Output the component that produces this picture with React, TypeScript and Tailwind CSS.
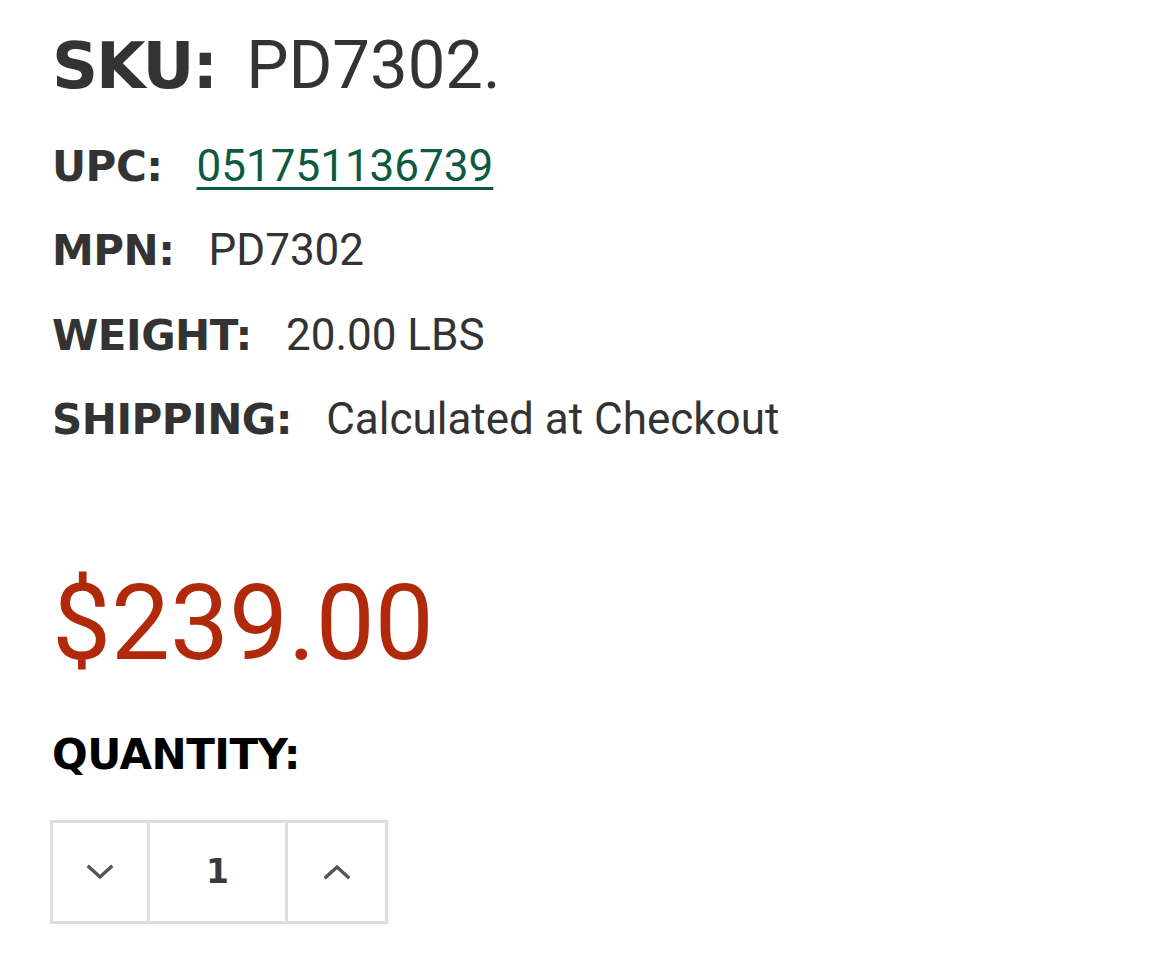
import React from "react";

function Row({ label, children, mt }: { label: string; children: React.ReactNode; mt: string }) {
  return (
    <div className={`flex items-baseline ${mt}`}>
      <span className="font-['DejaVu_Sans',sans-serif] font-bold text-[42px] leading-none tracking-[-0.5px] text-[#333333]">
        {label}
      </span>
      <span className="ml-[34px] font-['Roboto',sans-serif] text-[44px] leading-none text-[#333333]">{children}</span>
    </div>
  );
}

export default function App() {
  return (
    <div className="min-h-[969px] w-[1170px] bg-white pl-[52px] pt-[32px] font-['Roboto',sans-serif]">
      <div className="flex items-baseline">
        <span className="font-['DejaVu_Sans',sans-serif] font-bold text-[64px] leading-none tracking-[-2px] text-[#333333]">
          SKU:
        </span>
        <span className="ml-[30px] font-['Roboto',sans-serif] text-[67px] leading-none text-[#333333]">PD7302.</span>
      </div>
      <Row label="UPC:" mt="mt-[45px]">
        <a href="#" className="text-[#0d5a42] underline decoration-[3px] underline-offset-[6px]">
          051751136739
        </a>
      </Row>
      <Row label="MPN:" mt="mt-[40px]">PD7302</Row>
      <Row label="WEIGHT:" mt="mt-[41px]">20.00 LBS</Row>
      <Row label="SHIPPING:" mt="mt-[40px]">Calculated at Checkout</Row>

      <div className="mt-[130px] font-['Roboto',sans-serif] text-[105px] leading-none text-[#b0290b]">$239.00</div>

      <div className="mt-[58px] font-['DejaVu_Sans',sans-serif] font-bold text-[42px] leading-none tracking-[-0.5px] text-black">
        QUANTITY:
      </div>

      <div className="mt-[44px] flex h-[104px] w-[338px] border-[3px] border-[#dddddd] -ml-[2px]">
        <button className="flex w-[97px] items-center justify-center border-r-[3px] border-[#dddddd]">
          <svg width="26" height="16" viewBox="0 0 26 16" fill="none">
            <path d="M2 3 L13 13 L24 3" stroke="#555555" strokeWidth="3.5" strokeLinecap="square" />
          </svg>
        </button>
        <div className="flex w-[138px] items-center justify-center border-r-[3px] border-[#dddddd] font-['DejaVu_Sans',sans-serif] text-[33px] font-bold text-[#3a3a3a]">
          1
        </div>
        <button className="flex flex-1 items-center justify-center">
          <svg width="26" height="16" viewBox="0 0 26 16" fill="none">
            <path d="M2 13 L13 3 L24 13" stroke="#555555" strokeWidth="3.5" strokeLinecap="square" />
          </svg>
        </button>
      </div>
    </div>
  );
}
